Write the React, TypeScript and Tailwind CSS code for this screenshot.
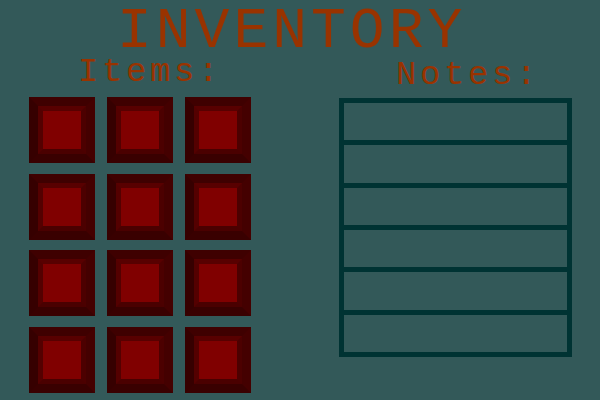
import React from "react";

function Slot() {
    return (
        <div className="h-[66px] w-[66px] border-[9px] border-t-[#3f0000] border-l-[#360000] border-r-[#440000] border-b-[#390000]">
            <div className="h-full w-full border-[5px] border-t-[#580000] border-l-[#540000] border-r-[#4c0000] border-b-[#4a0000] bg-[#800000]" />
        </div>
    );
}

export default function App() {
    const slots = Array.from({ length: 12 }, (_, i) => i);
    const notes = Array.from({ length: 6 }, (_, i) => i);

    return (
        <div className="h-[400px] w-[600px] overflow-hidden bg-[#335959] font-['Liberation_Mono',monospace] text-[#993300]">
            <h1 className="h-[51px] pl-[117px] text-[58px] leading-[63px] tracking-[4px]">
                INVENTORY
            </h1>
            <div className="flex">
                <div className="w-[339px] pl-[29px]">
                    <h2 className="h-[46px] pl-[49px] text-[34px] leading-[43px] tracking-[3.6px]">
                        Items:
                    </h2>
                    <div className="grid grid-cols-[66px_66px_66px] gap-x-[12px] gap-y-[10.5px]">
                        {slots.map((i) => (
                            <Slot key={i} />
                        ))}
                    </div>
                </div>
                <div className="flex-1">
                    <h2 className="h-[47px] pl-[57px] text-[34px] leading-[48px] tracking-[3.6px]">
                        Notes:
                    </h2>
                    <div className="flex h-[259px] w-[233px] flex-col divide-y-[5px] divide-[#003333] border-[5px] border-[#003333]">
                        {notes.map((i) => (
                            <div key={i} className="flex-1" />
                        ))}
                    </div>
                </div>
            </div>
        </div>
    );
}
